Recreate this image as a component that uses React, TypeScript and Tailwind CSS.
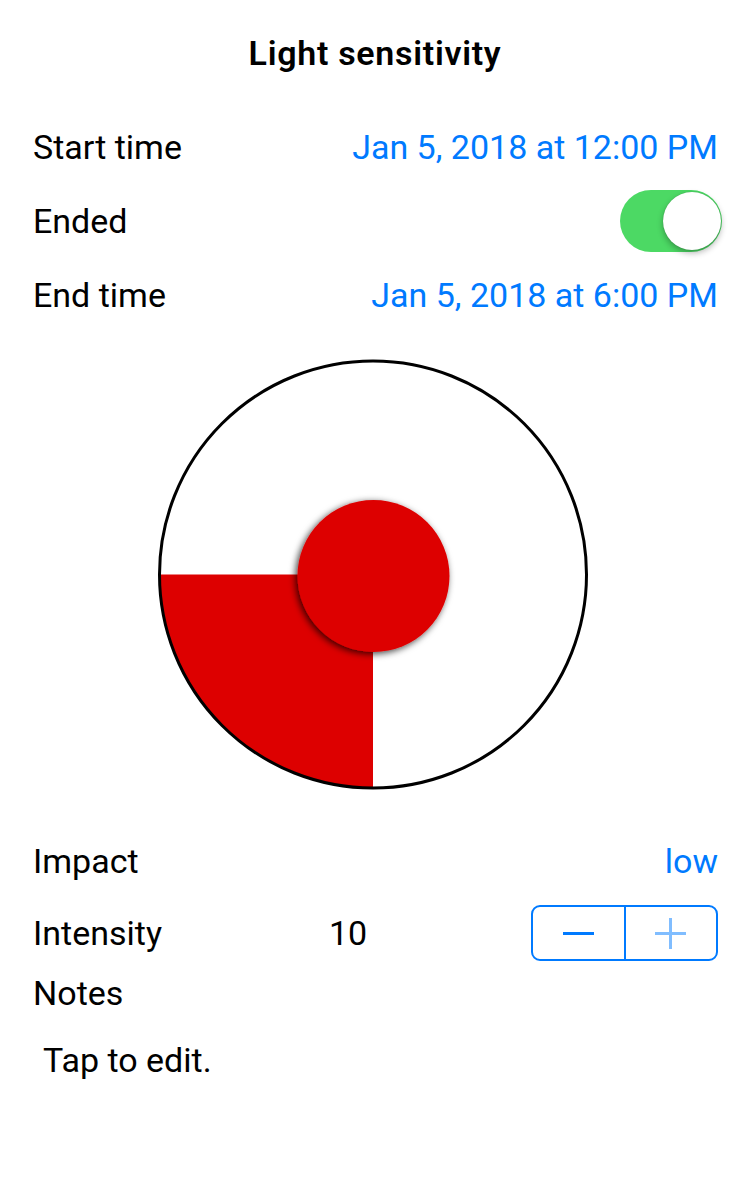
import React from "react";

const FONT = { fontFamily: "Roboto, 'Noto Sans', sans-serif" };

function Row({ label, children }: { label: string; children?: React.ReactNode }) {
  return (
    <div className="flex h-[74px] items-center justify-between">
      <span className="text-[34px] leading-none text-black">{label}</span>
      {children}
    </div>
  );
}

function Toggle() {
  return (
    <div className="relative -mr-[4px] h-[62px] w-[102px] rounded-full bg-[#4cd964]">
      <div className="absolute right-[1px] top-[2px] h-[58px] w-[58px] rounded-full bg-white shadow-[0_3px_6px_rgba(0,0,0,0.3),0_0_1px_rgba(0,0,0,0.25)]" />
    </div>
  );
}

function Dial() {
  const cx = 216;
  const cy = 216.5;
  const r = 213.5;
  return (
    <svg width="434" height="434" viewBox="0 0 434 434" className="ml-[157px] block">
      <defs>
        <filter id="knob" x="-30%" y="-30%" width="160%" height="160%">
          <feDropShadow dx="-2" dy="2" stdDeviation="3.5" floodColor="#000" floodOpacity="0.75" />
        </filter>
      </defs>
      <circle cx={cx} cy={cy} r={r} fill="#fff" />
      <path d={`M${cx} ${cy} L${cx - r} ${cy} A${r} ${r} 0 0 0 ${cx} ${cy + r} Z`} fill="#dd0000" />
      <circle cx={cx} cy={cy} r={r} fill="none" stroke="#000" strokeWidth="3" />
      <circle cx={cx + 0.5} cy={cy + 1.5} r="76" fill="#dd0000" filter="url(#knob)" />
    </svg>
  );
}

function Stepper() {
  return (
    <div className="flex h-[56px] w-[187px] overflow-hidden rounded-[9px] border-2 border-[#007aff]">
      <div className="flex flex-1 items-center justify-center border-r-2 border-[#007aff]">
        <div className="h-[3px] w-[31px] bg-[#007aff]" />
      </div>
      <div className="relative flex flex-1 items-center justify-center">
        <div className="h-[3px] w-[31px] bg-[#80bdff]" />
        <div className="absolute h-[31px] w-[3px] bg-[#80bdff]" />
      </div>
    </div>
  );
}

export default function App() {
  return (
    <div className="min-h-[1198px] w-[750px] bg-white text-black" style={FONT}>
      <header className="flex h-[106px] items-center justify-center">
        <h1 className="text-[34px] font-semibold leading-none tracking-[0.7px]">Light sensitivity</h1>
      </header>

      <section className="pl-[33px] pr-[32px] pt-[4px]">
        <Row label="Start time">
          <span className="text-[34px] leading-none text-[#007aff]">Jan 5, 2018 at 12:00 PM</span>
        </Row>
        <Row label="Ended">
          <Toggle />
        </Row>
        <Row label="End time">
          <span className="text-[34px] leading-none text-[#007aff]">Jan 5, 2018 at 6:00 PM</span>
        </Row>
      </section>

      <div className="mt-[26px]">
        <Dial />
      </div>

      <section className="mt-[34px] pl-[33px] pr-[32px]">
        <div className="flex h-[70px] items-center justify-between">
          <span className="text-[34px] leading-none">Impact</span>
          <span className="text-[34px] leading-none text-[#007aff]">low</span>
        </div>
        <div className="flex h-[74px] items-center">
          <span className="w-[296px] text-[34px] leading-none">Intensity</span>
          <span className="text-[34px] leading-none">10</span>
          <div className="ml-auto">
            <Stepper />
          </div>
        </div>
        <div className="flex h-[46px] items-center">
          <span className="text-[34px] leading-none">Notes</span>
        </div>
        <div className="mt-[14px] flex h-[60px] items-center pl-[10px]">
          <span className="text-[34px] leading-none">Tap to edit.</span>
        </div>
      </section>
    </div>
  );
}
